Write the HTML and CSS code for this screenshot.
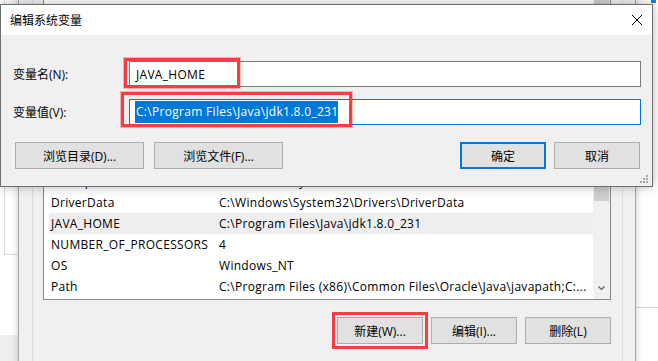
FILE: index.html
```html
<!doctype html>
<html>
<head>
<meta charset="utf-8">
<title>编辑系统变量</title>
<link rel="stylesheet" href="styles.css">
</head>
<body>
<div class="desktop">
	<div class="backdrop">
		<div class="side-box"></div>
		<div class="side-floor"></div>
		<div class="right-line"></div>
		<div class="corner-blue"></div>
	</div>

	<!-- 环境变量窗口（背后） -->
	<div class="envwin">
		<div class="group">
			<div class="listbox">
				<div class="rows">
					<div class="row"><span class="name">ComSpec</span><span class="val">C:\Windows\system32\cmd.exe</span></div>
					<div class="row"><span class="name">DriverData</span><span class="val">C:\Windows\System32\Drivers\DriverData</span></div>
					<div class="row sel"><span class="name">JAVA_HOME</span><span class="val">C:\Program Files\Java\jdk1.8.0_231</span></div>
					<div class="row"><span class="name">NUMBER_OF_PROCESSORS</span><span class="val">4</span></div>
					<div class="row"><span class="name">OS</span><span class="val">Windows_NT</span></div>
					<div class="row"><span class="name">Path</span><span class="val">C:\Program Files (x86)\Common Files\Oracle\Java\javapath;C:...</span></div>
				</div>
				<div class="scrollbar">
					<div class="thumb"></div>
					<svg class="arrow" width="7" height="5" viewBox="0 0 7 5"><path d="M0.5 0.5L3.5 3.5L6.5 0.5" fill="none" stroke="#606060" stroke-width="1.2"/></svg>
				</div>
			</div>
			<div class="list-buttons">
				<button class="btn small marked">新建(W)...</button>
				<button class="btn small">编辑(I)...</button>
				<button class="btn small">删除(L)</button>
			</div>
		</div>
	</div>

	<!-- 编辑系统变量 对话框 -->
	<div class="dialog">
		<div class="titlebar">
			<span class="title">编辑系统变量</span>
			<svg class="close" width="10" height="10" viewBox="0 0 10 10"><path d="M0 0L10 10M10 0L0 10" stroke="#000" stroke-width="1"/></svg>
		</div>
		<div class="dialog-body">
			<div class="field">
				<label>变量名(N):</label>
				<div class="input">JAVA_HOME</div>
			</div>
			<div class="field">
				<label>变量值(V):</label>
				<div class="input focus"><span class="selected">C:\Program Files\Java\jdk1.8.0_231</span></div>
			</div>
			<div class="dialog-buttons">
				<button class="btn wide">浏览目录(D)...</button>
				<button class="btn wide">浏览文件(F)...</button>
				<span class="spacer"></span>
				<button class="btn small default">确定</button>
				<button class="btn small">取消</button>
			</div>
		</div>
		<svg class="grip" width="9" height="9" viewBox="0 0 9 9" fill="#a9a9a9">
			<rect x="6" y="0" width="2" height="2"/>
			<rect x="3" y="3" width="2" height="2"/><rect x="6" y="3" width="2" height="2"/>
			<rect x="0" y="6" width="2" height="2"/><rect x="3" y="6" width="2" height="2"/><rect x="6" y="6" width="2" height="2"/>
		</svg>
	</div>

	<!-- 截图上的红框标注 -->
	<div class="mark mark-name"></div>
	<div class="mark mark-value"></div>
</div>
</body>
</html>
```

FILE: styles.css
```css
*{ margin:0; padding:0; box-sizing:border-box; }
body{ width:658px; height:361px; overflow:hidden; background:#fff; font-family:"Open Sans","Noto Sans CJK SC",sans-serif; font-size:12px; color:#000; }
.desktop{ position:relative; width:658px; height:361px; overflow:hidden; }

/* 背景 */
.backdrop{ position:absolute; left:0; top:0; width:658px; height:361px; background:#fff; }
.side-box{ position:absolute; left:4px; top:-1px; width:40px; height:256px; border:1px solid #dadada; }
.side-floor{ position:absolute; left:0; top:335px; width:30px; height:30px; background:#efefef; }
.right-line{ position:absolute; left:630px; top:307px; width:30px; height:1px; background:#d6d6d6; }
.corner-blue{ position:absolute; left:651px; top:0; width:5px; height:3px; background:#1f7fd6; }

/* 环境变量窗口 */
.envwin{ position:absolute; left:18px; top:-60px; width:618px; height:440px; background:#f0f0f0; border:1px solid #a5a5a5; box-shadow:0 0 7px rgba(0,0,0,.22); }
.group{ margin:0 12px 0 13px; height:100%; border-left:1px solid #dcdcdc; border-right:1px solid #dcdcdc; }
.listbox{ display:flex; height:350px; margin:9px 11px 0 10px; background:#fff; border:1px solid #828790; padding-left:5px; }
.rows{ flex:1; display:flex; flex-direction:column; justify-content:flex-end; overflow:hidden; padding-bottom:2px; }
.row{ display:flex; height:21px; line-height:21px; white-space:nowrap; letter-spacing:0.3px; }
.row.sel{ background:#eeeeee; }
.name{ width:170px; padding-left:2px; flex:none; }
.val{ flex:1; overflow:hidden; }
.scrollbar{ width:17px; flex:none; background:#f0f0f0; display:flex; flex-direction:column; align-items:center; }
.thumb{ width:15px; height:250px; background:#cdcdcd; }
.arrow{ margin-top:auto; margin-bottom:8px; }
.list-buttons{ display:flex; justify-content:flex-end; gap:8px; margin:17px 11px 0 0; }

/* 按钮 */
.btn{ height:27px; background:#e1e1e1; border:1px solid #adadad; font:inherit; color:#000; display:flex; align-items:center; justify-content:center; }
.btn.small{ width:86px; }
.btn.wide{ width:129px; }
.btn.default{ border:2px solid #0078d7; }
.btn.marked{ outline:3px solid #f53f3f; outline-offset:2px; }

/* 对话框 */
.dialog{ position:absolute; left:0; top:4px; width:653px; height:183px; background:#f0f0f0; border:1px solid #6e6e6e; box-shadow:0 0 10px rgba(0,0,0,.28); display:flex; flex-direction:column; }
.titlebar{ height:30px; background:#fff; display:flex; align-items:center; padding:0 10px 0 9px; }
.title{ flex:1; }
.dialog-body{ padding:26px 11px 0 12px; display:flex; flex-direction:column; gap:12px; }
.field{ display:flex; align-items:center; }
.field label{ width:116px; }
.input{ flex:1; height:26px; background:#fff; border:1px solid #7a7a7a; padding-left:6px; display:flex; align-items:center; white-space:nowrap; letter-spacing:0.3px; }
.input.focus{ border-color:#0078d7; }
.selected{ background:#0078d7; color:#fff; height:22px; line-height:22px; margin-left:-1px; padding-left:1px; }
.dialog-buttons{ display:flex; gap:10px; margin-top:5px; padding:0 1px 0 2px; }
.spacer{ flex:1; }
.dialog-buttons .default{ margin-right:-2px; }
.grip{ position:absolute; right:3px; bottom:2px; }

/* 红框 */
.mark{ position:absolute; border:3px solid #f53f3f; box-shadow:0 0 0 1px rgba(245,63,63,.35); }
.mark-name{ left:124px; top:58px; width:116px; height:30px; }
.mark-value{ left:121px; top:92px; width:231px; height:35px; }
```
